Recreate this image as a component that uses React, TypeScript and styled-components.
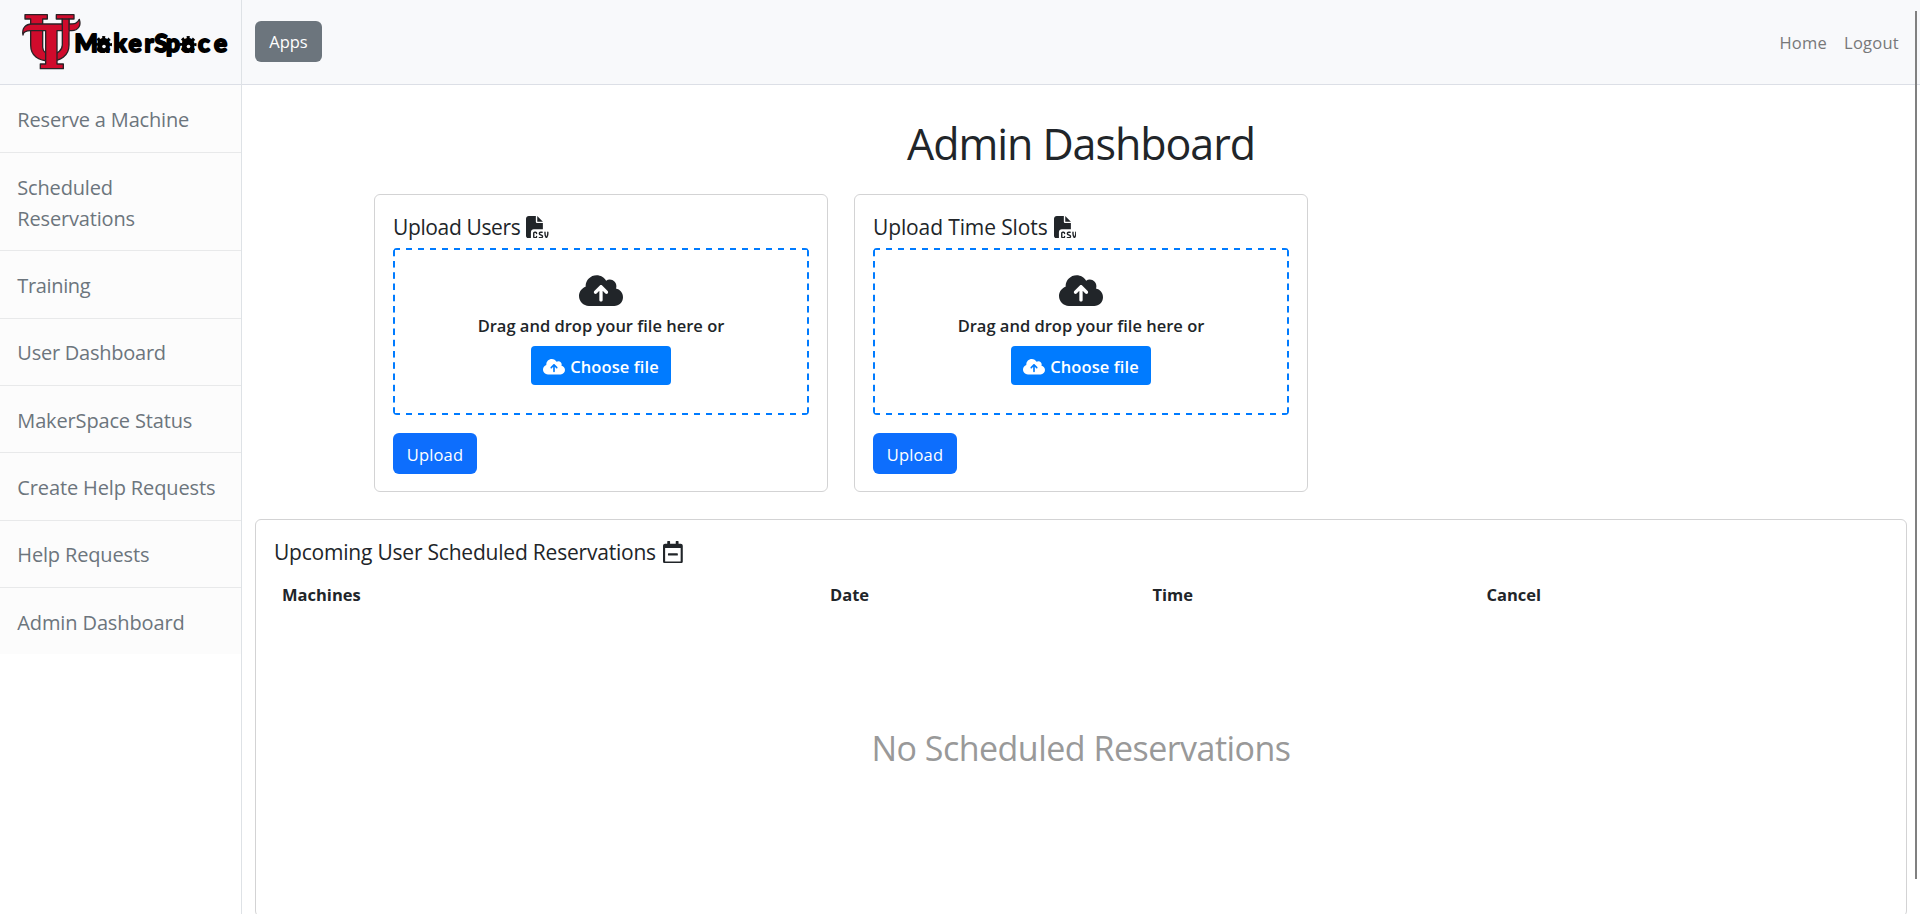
import React from 'react';
import styled, { createGlobalStyle } from 'styled-components';
import { FaCloudArrowUp, FaFileCsv } from 'react-icons/fa6';
import { FaRegCalendarMinus } from 'react-icons/fa';

const GlobalStyle = createGlobalStyle`
  *, *::before, *::after { box-sizing: border-box; }
  html, body { margin: 0; overflow: hidden; }
  body {
    background: #fff;
    color: #212529;
    font-family: "Open Sans", "Noto Sans", sans-serif;
    font-size: 16.5px;
    line-height: 26px;
  }
`;

const Page = styled.div`
  position: relative;
  display: flex;
  height: 914px;
  overflow: hidden;
`;

const Sidebar = styled.aside`
  flex: 0 0 242px;
  border-right: 1px solid #dee2e6;
`;

const SidebarHeading = styled.div`
  height: 84.65px;
  background: #f8f9fb;
  border-bottom: 1px solid #dcdfe6;
`;

const NavItem = styled.a<{ $spacing: number }>`
  display: block;
  padding: 18.6px 16px 16.5px 17.3px;
  border-top: 1px solid #e8e9ea;
  background: #fcfcfc;
  color: #6c757d;
  font-size: 20px;
  line-height: 31.2px;
  letter-spacing: ${(p) => p.$spacing}px;
  text-decoration: none;

  &:first-child {
    border-top: 0;
    padding-top: 19px;
    padding-bottom: 17.1px;
  }
`;

const Content = styled.div`
  flex: 1;
  min-width: 0;
`;

const TopBar = styled.header`
  display: flex;
  align-items: center;
  justify-content: space-between;
  height: 85px;
  padding: 0 21px 2px 13px;
  background: #f8f9fb;
  border-bottom: 1px solid #dcdfe6;
`;

const Button = styled.button<{ $color: string; $width: number; $spacing?: number }>`
  display: block;
  width: ${(p) => p.$width}px;
  height: 41px;
  padding: 2px 0 0;
  border: 0;
  border-radius: 6px;
  background: ${(p) => p.$color};
  color: #fff;
  font: inherit;
  letter-spacing: ${(p) => p.$spacing ?? 0}px;
`;

const TopLinks = styled.nav`
  display: flex;
  gap: 17px;
  padding-top: 3px;
  letter-spacing: 0.25px;
`;

const TopLink = styled.a`
  color: #777879;
  text-decoration: none;
`;

const Main = styled.main`
  padding: 33px 13px 0;
`;

const Title = styled.h1`
  margin: 0 0 24px;
  font-size: 43px;
  font-weight: 400;
  line-height: 52px;
  letter-spacing: -1.05px;
  text-align: center;
`;

const UploadRow = styled.div`
  display: flex;
  gap: 26px;
  margin: 0 0 27px 119px;
`;

const Card = styled.section`
  padding: 18px;
  border: 1px solid #d3d3d4;
  border-radius: 6px;
`;

const UploadCard = styled(Card)`
  width: 454px;
  height: 298px;
`;

const ReservationsCard = styled(Card)`
  height: 398px;
`;

const CardTitle = styled.h5<{ $spacing: number; $gap: number }>`
  display: flex;
  align-items: center;
  gap: ${(p) => p.$gap}px;
  height: 27px;
  margin: 0 0 8px;
  padding-top: 1px;
  font-size: 21px;
  font-weight: 400;
  letter-spacing: ${(p) => p.$spacing}px;
`;

const DropZone = styled.div`
  display: flex;
  flex-direction: column;
  align-items: center;
  height: 167px;
  margin-bottom: 18px;
  padding-top: 25.3px;
  border-radius: 4px;
  background:
    linear-gradient(90deg, #007bff 6.3px, transparent 0) 1px 0 / 12px 2px repeat-x,
    linear-gradient(90deg, #007bff 6.3px, transparent 0) 1px 100% / 12px 2px repeat-x,
    linear-gradient(#007bff 6.4px, transparent 0) 0 1.75px / 2px 11.25px repeat-y,
    linear-gradient(#007bff 6.4px, transparent 0) 100% 1.75px / 2px 11.25px repeat-y;
`;

const CloudIcon = styled(FaCloudArrowUp)`
  flex: none;
  width: 44px;
  height: 35.2px;
`;

const DropText = styled.p`
  margin: 4.5px 0 7.5px;
  font-weight: 600;
`;

const ChooseFile = styled.label`
  display: flex;
  align-items: center;
  justify-content: center;
  gap: 5px;
  width: 140px;
  height: 39px;
  border-radius: 4px;
  background: #007bff;
  color: #fff;
  font-weight: 600;
  letter-spacing: 0.1px;

  span { padding-top: 2px; }
`;

const SmallCloud = styled(FaCloudArrowUp)`
  width: 22px;
  height: 17.6px;
  margin-top: 2px;
`;

const CsvIcon = styled(FaFileCsv)`
  width: 22.5px;
  height: 22.5px;
`;

const CalendarIcon = styled(FaRegCalendarMinus)`
  width: 19.8px;
  height: 22.6px;
`;

const TableHead = styled.div`
  display: grid;
  grid-template-columns: 548px 322.5px 334px 1fr;
  margin-top: 17px;
  padding-left: 8px;
  font-weight: 700;
`;

const EmptyState = styled.p`
  margin: 119px 0 0;
  color: #999;
  font-size: 34px;
  line-height: 42px;
  letter-spacing: -0.52px;
  text-align: center;
`;

const ScrollThumb = styled.div`
  position: absolute;
  top: 11px;
  right: 3px;
  width: 2px;
  height: 868px;
  background: #808080;
`;

const LogoSvg = styled.svg`
  display: block;
`;

const Gear = ({ cx, cy }: { cx: number; cy: number }) => (
  <g>
    <circle cx={cx} cy={cy} r="6.2" />
    <circle
      cx={cx}
      cy={cy}
      r="7"
      fill="none"
      stroke="#000"
      strokeWidth="3"
      strokeDasharray="2.9 2.6"
      strokeDashoffset="1.5"
    />
  </g>
);

const Logo = () => (
  <LogoSvg width="241" height="83" viewBox="0 0 241 83">
    <g transform="scale(0.33333)" fill="#d00b2c" stroke="#2b2226" strokeWidth="4" strokeLinejoin="round">
      <path d="M75 44H142V57H128V142Q129 160 150 164Q186 160 187 135V57H169V44H222V57H207V135C207 169 180 183 150 183C115 183 92 167 92 135V57H75Z" />
      <path d="M69 105C65 84 77 72 96 72H205C224 72 232 72 238 58C244 77 235 91 215 92H171V192H190V206H121V192H137V92H92C78 92 70 96 69 105Z" />
      <path d="M187 94V57H207V94" />
      <path d="M189 90H205V98H189Z" stroke="none" />
    </g>
    <Gear cx={103.5} cy={44.5} />
    <Gear cx={188} cy={44.5} />
    <text
      x="74.5 97.5 113.5 128.5 144.5 154.5 166 182 198 214"
      y="51.5"
      fontFamily="Lato, sans-serif"
      fontWeight="900"
      fontSize="24.5"
      stroke="#000"
      strokeWidth="1.8"
      strokeLinejoin="round"
    >
      MakerSpace
    </text>
    <circle cx="104" cy="46.5" r="1.8" fill="#f8f9fb" />
    <circle cx="188.5" cy="46.5" r="1.8" fill="#f8f9fb" />
  </LogoSvg>
);

const navItems = [
  { label: 'Reserve a Machine', spacing: -0.17 },
  { label: 'Scheduled Reservations', spacing: -0.17 },
  { label: 'Training', spacing: -0.35 },
  { label: 'User Dashboard', spacing: -0.24 },
  { label: 'MakerSpace Status', spacing: -0.15 },
  { label: 'Create Help Requests', spacing: -0.13 },
  { label: 'Help Requests', spacing: -0.15 },
  { label: 'Admin Dashboard', spacing: -0.12 },
];

const uploads = [
  { title: 'Upload Users', spacing: -0.37 },
  { title: 'Upload Time Slots', spacing: -0.12 },
];

const columns = ['Machines', 'Date', 'Time', 'Cancel'];

export default function App() {
  return (
    <>
      <GlobalStyle />
      <Page>
        <Sidebar>
          <SidebarHeading>
            <Logo />
          </SidebarHeading>
          <nav>
            {navItems.map((item) => (
              <NavItem key={item.label} $spacing={item.spacing}>
                {item.label}
              </NavItem>
            ))}
          </nav>
        </Sidebar>
        <Content>
          <TopBar>
            <Button $color="#6c757d" $width={67}>Apps</Button>
            <TopLinks>
              <TopLink>Home</TopLink>
              <TopLink>Logout</TopLink>
            </TopLinks>
          </TopBar>
          <Main>
            <Title>Admin Dashboard</Title>
            <UploadRow>
              {uploads.map((u) => (
                <UploadCard key={u.title}>
                  <CardTitle $spacing={u.spacing} $gap={6}>
                    {u.title}
                    <CsvIcon />
                  </CardTitle>
                  <DropZone>
                    <CloudIcon />
                    <DropText>Drag and drop your file here or</DropText>
                    <ChooseFile>
                      <SmallCloud />
                      <span>Choose file</span>
                    </ChooseFile>
                  </DropZone>
                  <Button $color="#0d6efd" $width={84} $spacing={0.15}>Upload</Button>
                </UploadCard>
              ))}
            </UploadRow>
            <ReservationsCard>
              <CardTitle $spacing={-0.21} $gap={7}>
                Upcoming User Scheduled Reservations
                <CalendarIcon />
              </CardTitle>
              <TableHead>
                {columns.map((c) => (
                  <span key={c}>{c}</span>
                ))}
              </TableHead>
              <EmptyState>No Scheduled Reservations</EmptyState>
            </ReservationsCard>
          </Main>
        </Content>
        <ScrollThumb />
      </Page>
    </>
  );
}
